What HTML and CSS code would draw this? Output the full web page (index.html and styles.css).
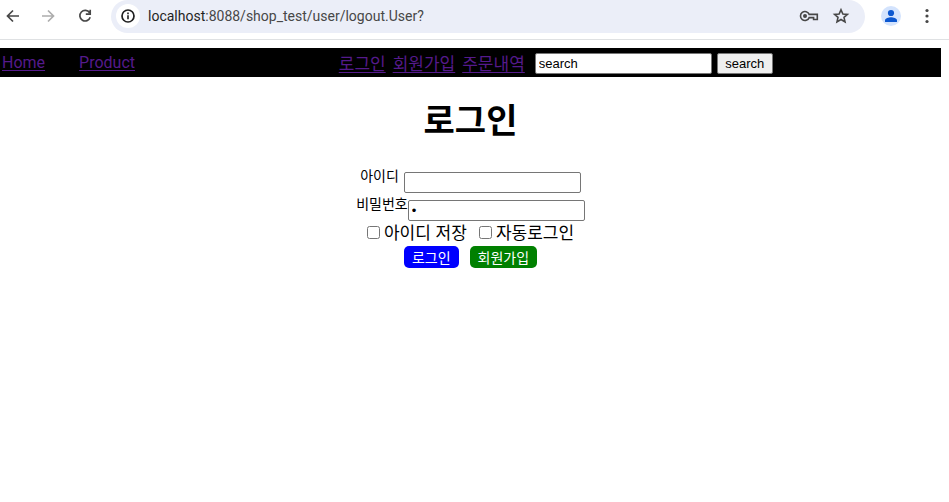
FILE: index.html
```html
<!DOCTYPE html>
<html lang="ko">
<head>
<meta charset="utf-8">
<title>로그인</title>
<link rel="stylesheet" href="styles.css">
</head>
<body>
<header class="toolbar">
  <button class="tool" type="button" aria-label="Back"><svg width="16" height="16" viewBox="0 0 16 16" fill="none" stroke="#474747" stroke-width="1.7"><path d="M14 8H3M8 2.5 2.5 8 8 13.5"/></svg></button>
  <button class="tool" type="button" aria-label="Forward"><svg width="16" height="16" viewBox="0 0 16 16" fill="none" stroke="#adadad" stroke-width="1.7"><path d="M2 8H13M8 2.5 13.5 8 8 13.5"/></svg></button>
  <button class="tool" type="button" aria-label="Reload"><svg width="16" height="16" viewBox="0 0 16 16" fill="none" stroke="#474747" stroke-width="1.7"><path d="M12.6 4.8A5.3 5.3 0 1 0 13.2 9.3M13.2 1.8V6.2H8.8"/></svg></button>
  <div class="address">
    <button class="info" type="button" aria-label="Site information"><svg width="16" height="16" viewBox="0 0 16 16" fill="none" stroke="#1f1f1f"><circle cx="8" cy="8" r="6" stroke-width="1.7"/><path d="M8 7.3V11.2M8 4.6V6.2" stroke-width="1.6"/></svg></button>
    <span class="url"><span class="host">localhost</span>:8088/shop_test/user/logout.User?</span>
    <button class="tool" type="button" aria-label="Passwords"><svg width="20" height="16" viewBox="0 0 20 16" fill="none" stroke="#474747" stroke-width="1.6"><path d="M10.2 6.4H18.3V11.5H14.6V9.6H10.2A4.5 4.5 0 1 1 10.2 6.4Z"/><circle cx="6" cy="8" r="2" fill="#474747" stroke="none"/></svg></button>
    <button class="tool" type="button" aria-label="Bookmark"><svg width="18" height="18" viewBox="0 0 18 18" fill="none" stroke="#474747" stroke-width="1.6"><path d="M9 2.8 10.9 7 15.4 7.4 12 10.4 13 14.9 9 12.5 5 14.9 6 10.4 2.6 7.4 7.1 7Z"/></svg></button>
  </div>
  <button class="tool profile" type="button" aria-label="Profile"><svg width="20" height="20" viewBox="0 0 20 20"><circle cx="10" cy="10" r="10" fill="#d3e3fd"/><g fill="#0b57d0"><circle cx="10" cy="7" r="3.1"/><path d="M4 16V14.3C4 12.2 7.8 11.3 10 11.3S16 12.2 16 14.3V16Z"/></g></svg></button>
  <button class="tool" type="button" aria-label="Menu"><svg width="16" height="16" viewBox="0 0 16 16" fill="#474747"><circle cx="8" cy="2.5" r="1.6"/><circle cx="8" cy="8" r="1.6"/><circle cx="8" cy="13.5" r="1.6"/></svg></button>
</header>
<nav class="nav">
  <div class="pages"><a href="#home">Home</a><a href="#product">Product</a></div>
  <div class="account"><a class="ko" href="#login">로그인</a><a class="ko" href="#join">회원가입</a><a class="ko" href="#orders">주문내역</a></div>
  <form class="search"><input class="field" type="text" value="search" aria-label="search"><button class="submit" type="button">search</button></form>
</nav>
<main class="login">
  <h1>로그인</h1>
  <form class="form">
    <div class="row spaced"><label for="userid">아이디</label><input class="field" id="userid" type="text"></div>
    <div class="row"><label for="userpw">비밀번호</label><input class="field" id="userpw" type="password" value="1"></div>
    <div class="checks">
      <span class="check"><input type="checkbox" id="saveid"><label for="saveid">아이디 저장</label></span>
      <span class="check"><input type="checkbox" id="auto"><label for="auto">자동로그인</label></span>
    </div>
    <div class="actions"><button class="btn blue" type="button">로그인</button><button class="btn green" type="button">회원가입</button></div>
  </form>
</main>
</body>
</html>
```
FILE: styles.css
```css
* { box-sizing: border-box; }
body {
  margin: 0;
  background: #fff;
  color: #000;
  font: 16px/24px Roboto, "Noto Sans CJK KR", sans-serif;
}
button { font-family: inherit; cursor: pointer; }
svg { display: block; }

.toolbar {
  display: flex;
  align-items: flex-start;
  height: 40px;
  padding-right: 14px;
  border-bottom: 1px solid #dfe1e3;
}
.tool {
  display: flex;
  align-items: center;
  justify-content: center;
  flex: none;
  width: 36px;
  height: 32px;
  margin: 0;
  padding: 0;
  border: 0;
  background: none;
}
.toolbar > .tool:first-child { width: 26px; }
.toolbar > .tool:nth-child(2) { width: 44px; }
.toolbar > .tool:nth-child(3) { width: 29px; }
.address {
  display: flex;
  align-items: flex-start;
  flex: 1;
  height: 33px;
  margin-left: 12px;
  padding: 0 8px 0 5px;
  border-radius: 17px;
  background: #ebeef8;
}
.info {
  display: flex;
  align-items: center;
  justify-content: center;
  width: 24px;
  height: 24px;
  margin-top: 4px;
  padding: 0;
  border: 0;
  border-radius: 50%;
  background: #fff;
}
.url {
  flex: 1;
  margin-left: 8px;
  color: #474747;
  font-size: 14px;
  line-height: 33px;
  white-space: nowrap;
}
.host { color: #1f1f1f; }
.address .tool { width: 32px; }
.profile { margin-left: 8px; }
.toolbar > .tool:last-child { width: 16px; margin-left: 10px; }

.nav {
  display: flex;
  align-items: center;
  height: 29px;
  margin: 8px 8px 0 0;
  padding-top: 1px;
  background: #000;
}
.nav a { color: #551a8b; text-decoration: underline; text-underline-offset: 2px; }
.pages { display: flex; gap: 34px; width: 36%; padding-left: 2px; }
.account { display: flex; gap: 7px; }
.ko, .check { font-family: "Noto Sans CJK KR", sans-serif; font-size: 17px; }
.search { display: flex; gap: 5px; margin-left: 10px; }
.field {
  width: 177px;
  height: 21px;
  margin: 0;
  padding: 1px 3px;
  border: 1px solid #767676;
  border-radius: 2px;
  background: #fff;
  color: #000;
  font: 13px "Liberation Sans", sans-serif;
}
.submit {
  width: 56px;
  height: 21px;
  padding: 0;
  border: 1px solid #767676;
  border-radius: 2px;
  background: #efefef;
  color: #000;
  font: 13px "Liberation Sans", sans-serif;
}

.login { margin-right: 8px; font-family: "Noto Sans CJK KR", sans-serif; }
h1 {
  margin: 19px 0 23px;
  font-size: 34px;
  line-height: 46px;
  text-align: center;
}
.form { display: flex; flex-direction: column; align-items: center; }
.row { display: flex; align-items: flex-end; height: 28px; }
.row label { align-self: flex-start; font-size: 14px; line-height: 20px; }
.spaced { gap: 5px; }
.checks { display: flex; gap: 12px; height: 22px; }
.check { display: flex; align-items: center; gap: 4px; }
.check input { width: 13px; height: 13px; margin: 0; }
.actions { display: flex; gap: 11px; margin-top: 3px; }
.btn {
  height: 22px;
  padding: 0 8px;
  border: 0;
  border-radius: 5px;
  color: #fff;
  font-size: 14px;
  line-height: 22px;
}
.blue { background: #00f; }
.green { background: #008000; }
```
